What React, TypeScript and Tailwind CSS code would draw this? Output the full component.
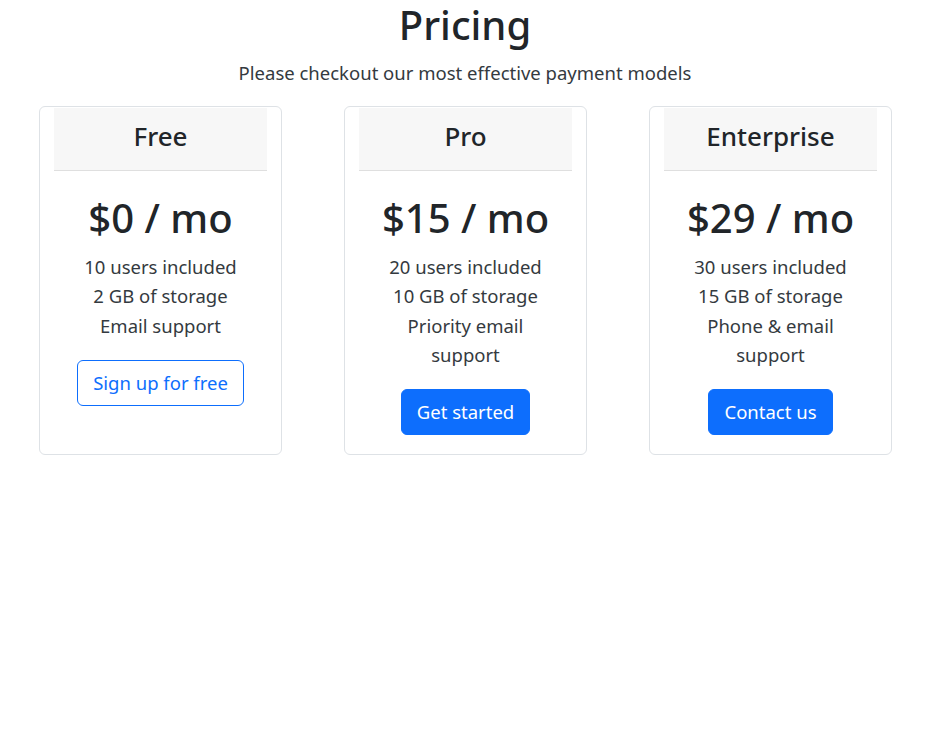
import React from "react";

interface Plan {
  name: string;
  price: string;
  features: string[];
  cta: string;
  outline?: boolean;
}

const plans: Plan[] = [
  {
    name: "Free",
    price: "$0 / mo",
    features: ["10 users included", "2 GB of storage", "Email support"],
    cta: "Sign up for free",
    outline: true,
  },
  {
    name: "Pro",
    price: "$15 / mo",
    features: ["20 users included", "10 GB of storage", "Priority email support"],
    cta: "Get started",
  },
  {
    name: "Enterprise",
    price: "$29 / mo",
    features: ["30 users included", "15 GB of storage", "Phone & email support"],
    cta: "Contact us",
  },
];

const App: React.FC = () => {
  return (
    <div
      className="min-h-screen w-[944px] bg-white text-[#212529]"
      style={{ fontFamily: '"Noto Sans", "Open Sans", Arial, sans-serif' }}
    >
      <div className="w-[930px]">
        {/* Header */}
        <header className="pt-[1px] text-center">
          <h1 className="text-[40px] leading-[48px] font-medium">Pricing</h1>
          <p className="mt-[9px] text-[18.5px] leading-[29px] text-[#343a40]">
            Please checkout our most effective payment models
          </p>
        </header>

        {/* Cards */}
        <section className="mt-[19px] pl-[39px] grid grid-cols-[243px_243px_243px] gap-[62px]">
          {plans.map((plan) => (
            <article
              key={plan.name}
              className="border border-[#dee2e6] rounded-[6px] flex flex-col text-center"
            >
              <div className="mx-[14px] mt-[1px] h-[63px] pb-[6px] bg-[#f7f7f7] border-b border-[#dfdfdf] flex items-center justify-center">
                <h4 className="text-[26px] leading-[34px] font-medium">{plan.name}</h4>
              </div>
              <div className="px-[35px] pt-[19px] pb-[19px] flex flex-col items-center">
                <h2 className="text-[40px] leading-[55px] font-medium whitespace-nowrap">
                  {plan.price}
                </h2>
                <ul className="mt-[7px] text-[18.5px] leading-[29.3px] text-[#343a40]">
                  {plan.features.map((f) => (
                    <li key={f}>{f}</li>
                  ))}
                </ul>
                <button
                  className={
                    plan.outline
                      ? "mt-[20px] h-[46px] px-[15px] rounded-[6px] border border-[#0d6efd] text-[#0d6efd] text-[18.5px] bg-white whitespace-nowrap"
                      : "mt-[20px] h-[46px] px-[15px] rounded-[6px] border border-[#0d6efd] bg-[#0d6efd] text-white text-[18.5px] whitespace-nowrap"
                  }
                >
                  {plan.cta}
                </button>
              </div>
            </article>
          ))}
        </section>
      </div>
    </div>
  );
};

export default App;
